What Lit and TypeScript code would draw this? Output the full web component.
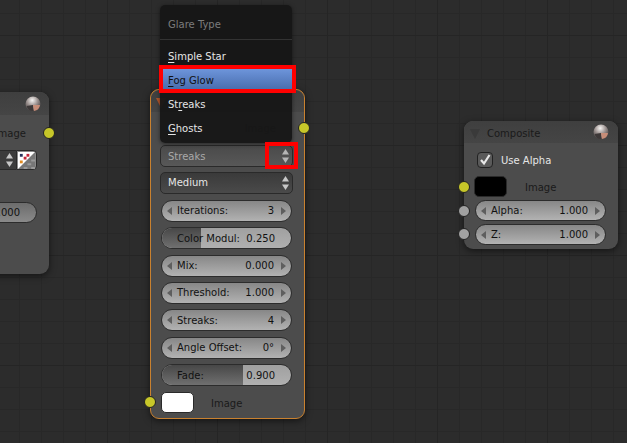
import { LitElement, css, html } from 'lit';
import { customElement } from 'lit/decorators.js';

const arrows = html`<svg class="updown" viewBox="0 0 9 16" width="9" height="16">
  <path d="M4.5 1 L8 6.5 L1 6.5 Z"></path><path d="M4.5 15 L8 9.5 L1 9.5 Z"></path>
</svg>`;

const ball = html`<svg class="ball" viewBox="0 0 16 16" width="16" height="16">
  <defs>
    <radialGradient id="b" cx="45%" cy="25%" r="70%">
      <stop offset="0" stop-color="#f6f4f2"></stop>
      <stop offset="0.5" stop-color="#a09694"></stop>
      <stop offset="1" stop-color="#4a4444"></stop>
    </radialGradient>
  </defs>
  <circle cx="8" cy="8" r="7.5" fill="url(#b)"></circle>
  <path d="M8 9 L15 9 A7 7 0 0 1 9 15 Z" fill="#c78d78"></path>
  <path d="M8 9 L8 15 A7 7 0 0 1 1.5 10 Z" fill="#3d3838"></path>
</svg>`;

function field(label: string, value: string) {
  return html`<div class="field">
    <span class="tri l"></span><span class="lbl">${label}</span><span class="val">${value}</span><span class="tri r"></span>
  </div>`;
}

function slider(label: string, value: string, pct: number) {
  return html`<div class="slider">
    <div class="fill" style="width:${pct}%"></div>
    <span class="slbl">${label}</span><span class="sval">${value}</span>
  </div>`;
}

@customElement('app-root')
export class AppRoot extends LitElement {
  static styles = css`
:host {
  display: block;
  width: 627px;
  height: 443px;
  overflow: hidden;
  position: relative;
  font-family: "DejaVu Sans", sans-serif;
  font-size: 10px;
  color: #e6e6e6;
  background-color: #2c2c2c;
  background-image:
    linear-gradient(#252525 1px, transparent 1px),
    linear-gradient(90deg, #252525 1px, transparent 1px),
    linear-gradient(#282828 1px, transparent 1px),
    linear-gradient(90deg, #282828 1px, transparent 1px);
  background-size: 110px 110px, 110px 110px, 22px 22px, 22px 22px;
  background-position: 0 35px, 107px 0, 0 13px, 19px 0;
}
.node {
  position: absolute;
  background: #4c4c4c;
  border-radius: 9px;
  box-shadow: 0 2px 7px rgba(0,0,0,.55);
  box-sizing: border-box;
}
.glare {
  left: 150px; top: 89px; width: 155px; height: 330px;
  border: 1px solid #c9812f;
  padding: 0 11px;
}
.left { left: -110px; top: 92px; width: 159px; height: 182px; }
.comp { left: 464px; top: 121px; width: 154px; height: 128px; }
.head {
  height: 22px; background: linear-gradient(#3f3f3f, #454545); border-radius: 9px 9px 0 0;
  display: flex; align-items: center; justify-content: flex-end;
  padding: 0 9px; color: #1a1a1a;
}
.glare .head { margin: 0 -11px; }
.left .head { height: 23px; padding-right: 8px; }
.head .name { margin-right: auto; padding-left: 14px; padding-top: 2px; }
.tridown {
  position: absolute; left: 6px; top: 8px;
  border-left: 5.5px solid transparent; border-right: 5.5px solid transparent;
  border-top: 10px solid #3a3a3a;
}
.glare .tridown { border-top-color: #b3562b; left: 5px; }
.outrow { height: 33px; line-height: 33px; text-align: right; padding-right: 17px; color: #1a1a1a; }
.select {
  height: 22px; box-sizing: border-box; border: 1px solid #2a2a2a; border-radius: 5px;
  background: linear-gradient(#3a3a3a, #4a4a4a);
  display: flex; align-items: center; justify-content: space-between;
  padding: 0 2px 0 7px; margin: 0 0 6.2px -2px;
}
.select.dim { color: #a9a9a9; background: linear-gradient(#4a4a4a, #585858); margin-bottom: 4.6px; }
.updown { fill: #c8c8c8; flex: none; }
.select.dim .updown { fill: #b5b5b5; }
.field, .slider {
  height: 22px; box-sizing: border-box; border: 1px solid #2c2c2c; border-radius: 11px;
  display: flex; align-items: center; color: #111; margin: 0 1px 5.4px -1px;
  position: relative; overflow: hidden; flex: none;
}
.field {
  background: linear-gradient(#878787, #b2b2b2);
  padding: 0 5px;
}
.lbl { margin-left: 5px; margin-right: auto; }
.val { margin-right: 7px; }
.tri { width: 0; height: 0; border-top: 4px solid transparent; border-bottom: 4px solid transparent; flex: none; }
.tri.l { border-right: 5px solid #5e5e5e; }
.tri.r { border-left: 5px solid #5e5e5e; }
.slider { background: linear-gradient(#a0a0a0, #b0b0b0); }
.fill { position: absolute; left: 0; top: 0; bottom: 0; background: linear-gradient(#474747, #707070); }
.slbl, .sval { position: relative; }
.slbl { margin-left: 15px; margin-right: auto; }
.sval { margin-right: 16px; }
.out { display: flex; align-items: center; gap: 18px; }
.out .dark { padding-top: 2px; }
.glare .out { margin: 0 -1px; gap: 17px; }
.swatch {
  width: 33px; height: 21px; box-sizing: border-box; border-radius: 5px; border: 1px solid #2a2a2a;
}
.white { background: #fff; }
.black { background: #000; }
.sock {
  position: absolute; width: 10px; height: 10px; border-radius: 50%;
  border: 1px solid #222; box-sizing: content-box;
}
.y { background: #c7c729; }
.g { background: #a1a1a1; }
.dark { color: #1a1a1a; }
.menu {
  position: absolute; left: 160px; top: 5px; width: 132px; height: 138px;
  background: rgba(23,23,23,.96); border-radius: 5px; color: #e6e6e6;
  box-shadow: 0 1px 4px rgba(0,0,0,.5);
}
.mtitle { height: 34px; line-height: 40px; padding-left: 8px; color: #7c7c7c; border-bottom: 1px solid #333; margin-bottom: 4px; }
.mitem { height: 24px; line-height: 26px; padding-left: 8px; }
.mitem u { text-underline-offset: 2px; }
.mitem.sel { background: linear-gradient(#6f97dd, #4468a8); color: #111; }
.red { position: absolute; border: 4px solid #f00; box-sizing: border-box; }
.compbody { padding: 9px 12px 0 10px; display: flex; flex-direction: column; }
.comp .field { height: 21px; margin: 0 0 3px 1px; }
.check { display: flex; align-items: center; gap: 8px; height: 16px; padding-left: 3px; margin-bottom: 8px; }
.box {
  width: 16px; height: 16px; box-sizing: border-box; border: 1px solid #222; border-radius: 4px; background: #5a5a5a;
  display: flex; align-items: center; justify-content: center;
}
.leftbody { display: flex; flex-direction: column; align-items: flex-end; padding: 7px 12px 0 0; }
.imgname { height: 22px; line-height: 23px; padding-right: 11px; color: #1a1a1a; white-space: nowrap; }
.imgrow { display: flex; align-items: center; height: 20px; margin-top: 6px; }
.imgsel {
  width: 50px; height: 20px; box-sizing: border-box; border: 1px solid #2a2a2a; border-right: 0;
  border-radius: 4px 0 0 4px; background: #3c3c3c;
  display: flex; align-items: center; justify-content: flex-end; padding-right: 2px;
}
.imgbtn {
  width: 21px; height: 20px; box-sizing: border-box; border: 1px solid #2a2a2a; border-radius: 0 4px 4px 0;
  background: #8a8a8a; padding: 1px; display: flex;
}
.lfield {
  width: 80px; height: 21px; margin-top: 32px; box-sizing: border-box; border: 1px solid #2c2c2c;
  border-radius: 11px; background: linear-gradient(#6c6c6c, #8a8a8a); color: #111;
  line-height: 20px; text-align: right; padding-right: 16px;
}
`;

  render() {
    return html`
<div class="node left">
  <div class="head">${ball}</div>
  <span class="sock y" style="right:-6px;top:35px"></span>
  <div class="leftbody">
    <div class="imgname">Image</div>
    <div class="imgrow">
      <div class="imgsel">${arrows}</div>
      <div class="imgbtn">
        <svg viewBox="0 0 18 18" width="17" height="17">
          <rect width="18" height="18" fill="#777"></rect>
          <path d="M18 4V8H14V12H10V16H6V18H10V14H14V10H18ZM18 12V16H14V18H18Z" fill="#999"></path>
          <path d="M0 0H18L0 18Z" fill="#fff"></path>
          <rect x="2" y="2" width="3" height="3" fill="#26305a"></rect>
          <rect x="9" y="2" width="3" height="3" fill="#c2263a"></rect>
          <rect x="6" y="5" width="3" height="3" fill="#c2263a"></rect>
          <rect x="2" y="9" width="3" height="3" fill="#e08a20"></rect>
        </svg>
      </div>
    </div>
    <div class="lfield">1.000</div>
  </div>
</div>

<div class="node glare">
  <div class="head"><span class="tridown"></span></div>
  <span class="sock y" style="right:-6px;top:32px"></span>
  <span class="sock y" style="left:-7px;top:306px"></span>
  <div class="outrow">Image</div>
  <div class="select dim"><span>Streaks</span>${arrows}</div>
  <div class="select"><span>Medium</span>${arrows}</div>
  ${field('Iterations:', '3')}
  ${slider('Color Modul:', '0.250', 30)}
  ${field('Mix:', '0.000')}
  ${field('Threshold:', '1.000')}
  ${field('Streaks:', '4')}
  ${field('Angle Offset:', '0°')}
  ${slider('Fade:', '0.900', 63)}
  <div class="out"><div class="swatch white"></div><span class="dark">Image</span></div>
</div>

<div class="node comp">
  <div class="head"><span class="tridown"></span><span class="name">Composite</span>${ball}</div>
  <span class="sock y" style="left:-6px;top:60px"></span>
  <span class="sock g" style="left:-6px;top:84px"></span>
  <span class="sock g" style="left:-6px;top:107px"></span>
  <div class="compbody">
    <div class="check">
      <span class="box">
        <svg viewBox="0 0 14 14" width="14" height="14"><path d="M3 7 L6 10.5 L11.5 2" fill="none" stroke="#e8e8e8" stroke-width="2.2"></path></svg>
      </span>
      Use Alpha
    </div>
    <div class="out" style="margin-bottom:3px"><div class="swatch black"></div><span class="dark">Image</span></div>
    ${field('Alpha:', '1.000')}
    ${field('Z:', '1.000')}
  </div>
</div>

<div class="menu">
  <div class="mtitle">Glare Type</div>
  <div class="mitem"><u>S</u>imple Star</div>
  <div class="mitem sel"><u>F</u>og Glow</div>
  <div class="mitem">St<u>r</u>eaks</div>
  <div class="mitem"><u>G</u>hosts</div>
</div>
<div class="red" style="left:159px;top:65px;width:137px;height:28px"></div>
<div class="red" style="left:265px;top:142px;width:33px;height:27px"></div>
`;
  }
}
